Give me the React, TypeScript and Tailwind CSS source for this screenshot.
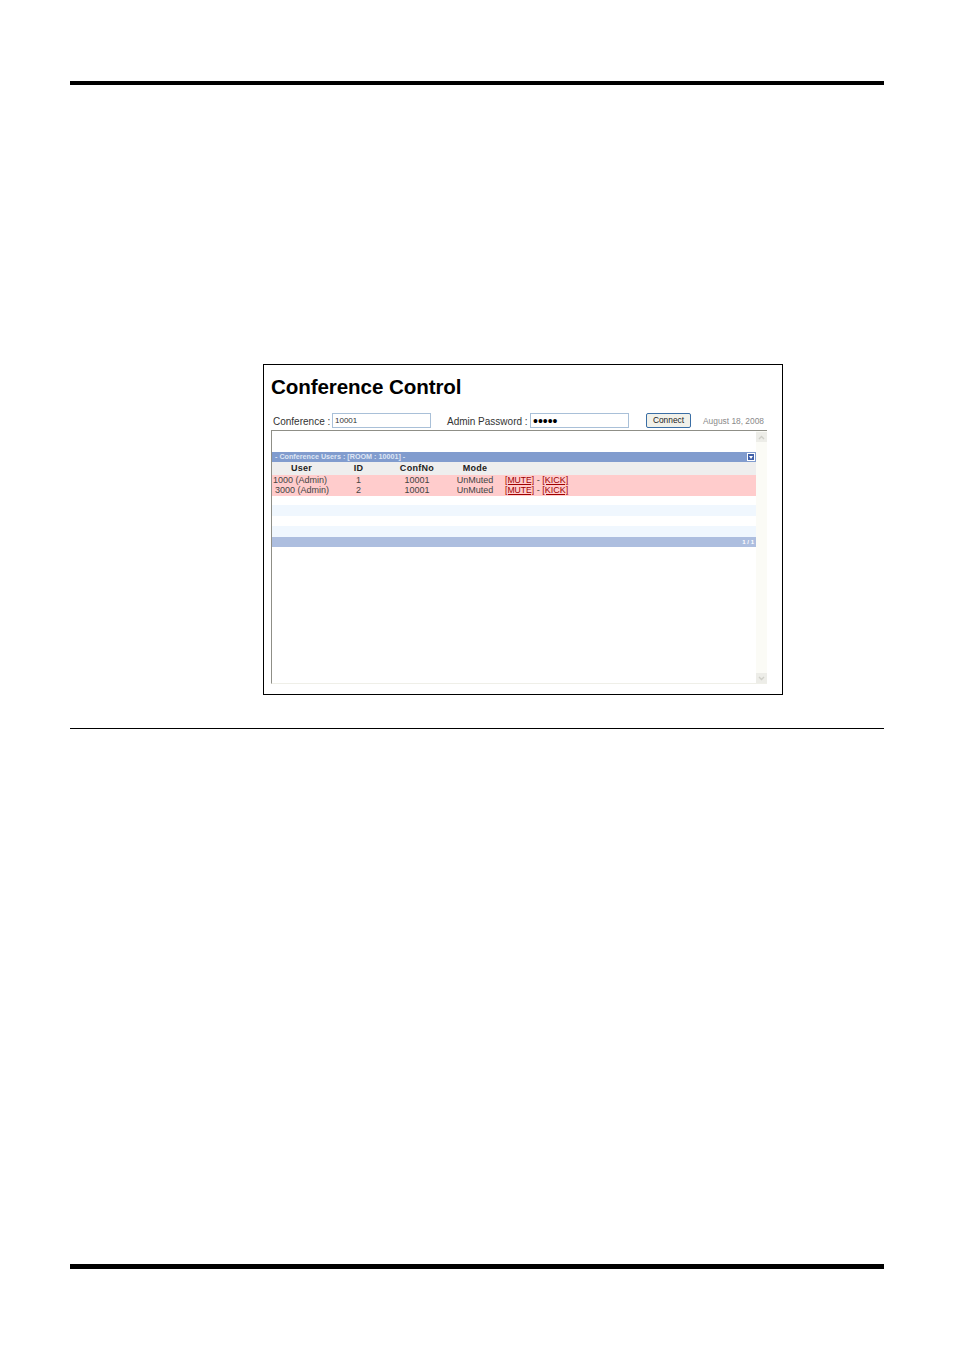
const font = "font-['Liberation_Sans',Arial,sans-serif]";

const rows = [
  { user: "1000 (Admin)", pad: "pl-[1px]", id: "1" },
  { user: "3000 (Admin)", pad: "pl-[3px]", id: "2" },
];

const cols = "grid grid-cols-[59px_55px_62px_54px_1fr]";

function Table() {
  return (
    <div className="flex flex-col">
      <div className="flex h-[10px] items-center justify-between bg-[#819cce] pl-[3px] pr-[1px] text-[7.2px] leading-[10px] font-bold text-[#dfe6f4]">
        <span>- Conference Users : [ROOM : 10001] -</span>
        <span className="flex h-[8px] w-[8px] items-center justify-center border border-white bg-[#3f5fa8]">
          <svg width="6" height="6" viewBox="0 0 6 6"><path d="M1 2h4L3 5z" fill="#fff" /></svg>
        </span>
      </div>
      <div className={`${cols} h-[13px] items-center bg-[#eeeeee] text-center text-[9px] leading-[13px] font-bold tracking-[0.3px] text-[#222]`}>
        <span>User</span>
        <span>ID</span>
        <span>ConfNo</span>
        <span>Mode</span>
        <span />
      </div>
      <div className="flex h-[21px] flex-col bg-[#ffcccc]">
        {rows.map((r) => (
          <div key={r.id} className={`${cols} h-[10px] text-[9px] leading-[10px] text-[#444]`}>
            <span className={`${r.pad} whitespace-nowrap`}>{r.user}</span>
            <span className="text-center">{r.id}</span>
            <span className="text-center">10001</span>
            <span className="text-center">UnMuted</span>
            <span className="whitespace-nowrap pl-[3px]">
              <span className="text-[8.6px] text-[#a00000] underline">[MUTE]</span> - <span className="text-[#a00000] underline">[KICK]</span>
            </span>
          </div>
        ))}
      </div>
      <div className="h-[9px] bg-white" />
      <div className="h-[11px] bg-[#f0f7fe]" />
      <div className="h-[10px] bg-white" />
      <div className="h-[11px] bg-[#f0f7fe]" />
      <div className="flex h-[10px] items-center justify-end bg-[#adbedf] pr-[2px] text-[6px] leading-[10px] font-bold text-white">
        1 / 1
      </div>
    </div>
  );
}

function Scrollbar() {
  return (
    <div className="flex w-[11px] flex-col justify-between bg-[#fbfbf6] pt-[1px]">
      <div className="flex h-[10px] items-center justify-center bg-[#ededE8]">
        <svg width="7" height="5" viewBox="0 0 7 5"><path d="M1 4l2.5-2.5L6 4" fill="none" stroke="#cfcfc8" strokeWidth="1.4" /></svg>
      </div>
      <div className="flex h-[10px] items-center justify-center bg-[#ededE8]">
        <svg width="7" height="5" viewBox="0 0 7 5"><path d="M1 1l2.5 2.5L6 1" fill="none" stroke="#cfcfc8" strokeWidth="1.4" /></svg>
      </div>
    </div>
  );
}

function Field({ value, wide, dots }: { value: string; wide: string; dots?: boolean }) {
  return (
    <span className={`${wide} mb-[2px] flex h-[15px] items-center border border-[#a9c0d8] bg-white pl-[2px] ${dots ? "pt-[1px] text-[14px] text-black" : "text-[8px] text-[#333]"}`}>
      {value}
    </span>
  );
}

function ConferenceBox() {
  return (
    <div className="ml-[193px] flex h-[331px] w-[520px] flex-col border border-black bg-white pl-[7px]">
      <h1 className="mt-[8px] h-[27px] text-[20.6px] leading-[27px] font-bold tracking-[-0.1px] text-black">Conference Control</h1>
      <div className="mt-[13px] flex h-[17px] items-center text-[10px] text-[#333]">
        <span className="ml-[2px] w-[59px] whitespace-nowrap">Conference :</span>
        <Field value="10001" wide="w-[99px]" />
        <span className="ml-[16px] w-[83px] whitespace-nowrap">Admin Password :</span>
        <Field value="•••••" wide="w-[99px]" dots />
        <span className="mb-[2px] ml-[17px] flex h-[15px] w-[45px] items-center justify-center rounded-[2px] border border-[#3a6ea5] bg-[#f1f1ea] text-[8.4px] text-[#222]">Connect</span>
        <span className="ml-[12px] whitespace-nowrap text-[8.4px] text-[#8a8a8a]">August 18, 2008</span>
      </div>
      <div className="flex h-[254px] w-[496px] border-t border-l border-t-[#8f8f87] border-l-[#8f8f87] border-b border-b-[#efefe8]">
        <div className="min-w-0 flex-1 pt-[21px]">
          <Table />
        </div>
        <Scrollbar />
      </div>
    </div>
  );
}

export default function App() {
  return (
    <div className={`${font} h-[1351px] w-[954px] bg-white`}>
      <div className="px-[70px] pt-[81px]">
        <div className="h-[4px] bg-black" />
      </div>
      <div className="pl-[70px] pr-[70px] pt-[279px]">
        <ConferenceBox />
      </div>
      <div className="px-[70px] pt-[33px]">
        <div className="h-px bg-black" />
      </div>
      <div className="px-[70px] pt-[535px]">
        <div className="h-[5px] bg-black" />
      </div>
    </div>
  );
}
